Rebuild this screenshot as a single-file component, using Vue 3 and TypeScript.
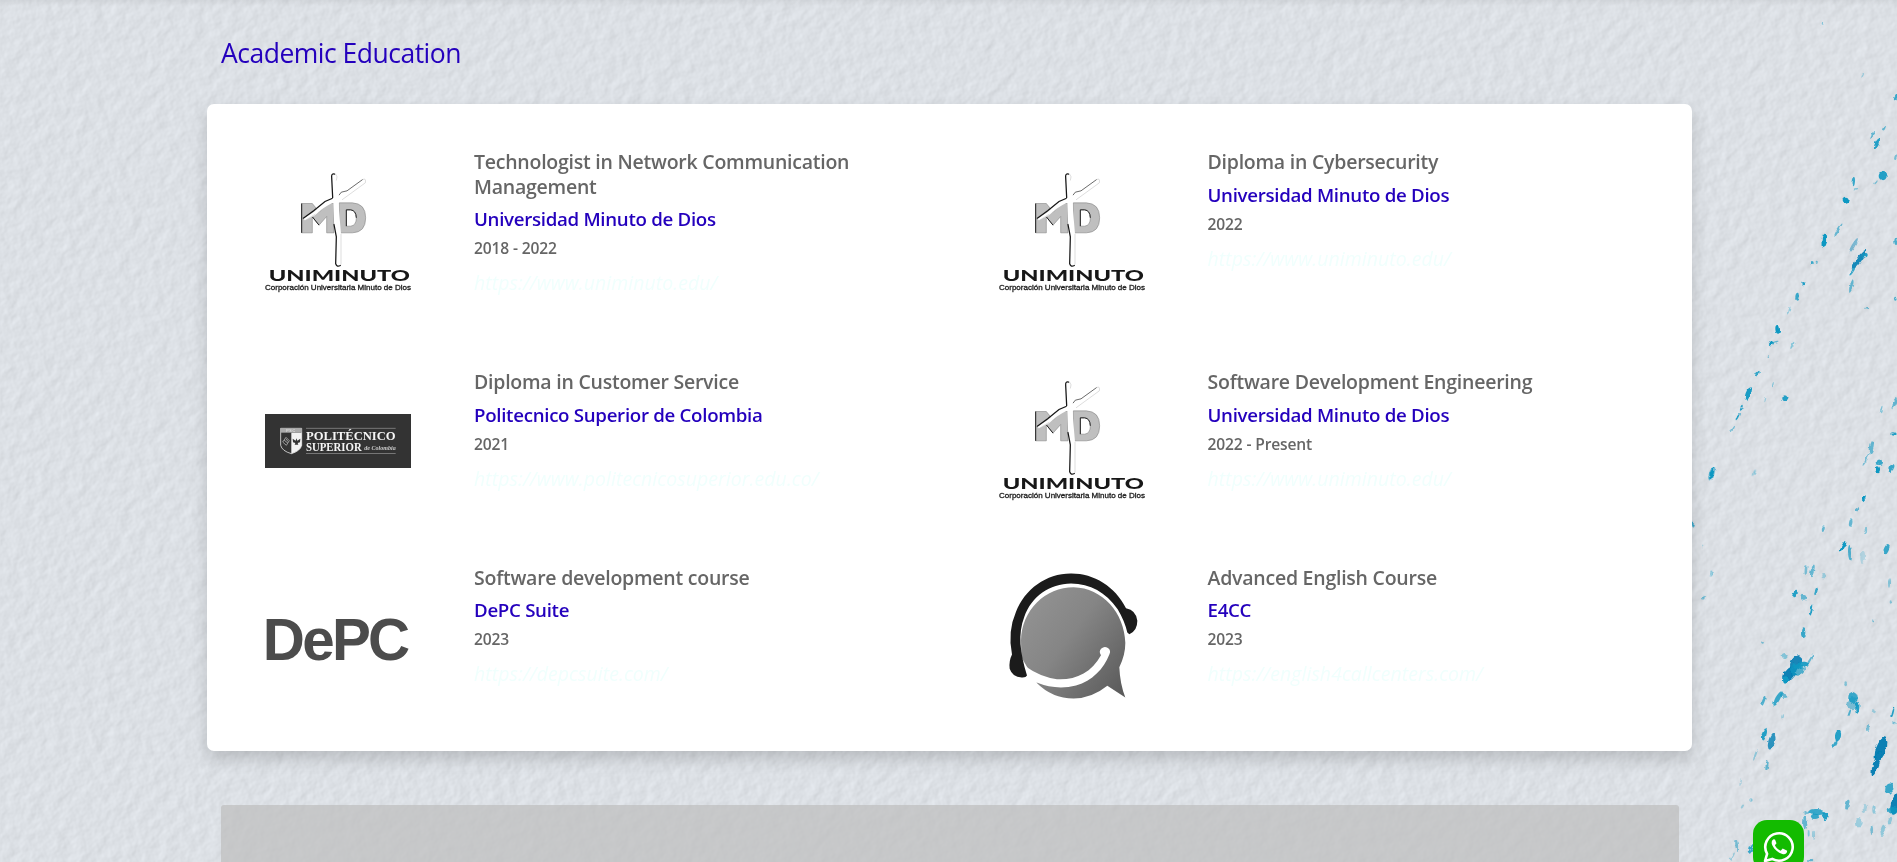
<script setup lang="ts">
interface Course {
  title: string
  school: string
  date: string
  link: string
  logo: 'uniminuto' | 'politecnico' | 'depc' | 'e4cc'
}

const courses: Course[] = [
  { title: 'Technologist in Network Communication Management', school: 'Universidad Minuto de Dios', date: '2018 - 2022', link: 'https://www.uniminuto.edu/', logo: 'uniminuto' },
  { title: 'Diploma in Cybersecurity', school: 'Universidad Minuto de Dios', date: '2022', link: 'https://www.uniminuto.edu/', logo: 'uniminuto' },
  { title: 'Diploma in Customer Service', school: 'Politecnico Superior de Colombia', date: '2021', link: 'https://www.politecnicosuperior.edu.co/', logo: 'politecnico' },
  { title: 'Software Development Engineering', school: 'Universidad Minuto de Dios', date: '2022 - Present', link: 'https://www.uniminuto.edu/', logo: 'uniminuto' },
  { title: 'Software development course', school: 'DePC Suite', date: '2023', link: 'https://depcsuite.com/', logo: 'depc' },
  { title: 'Advanced English Course', school: 'E4CC', date: '2023', link: 'https://english4callcenters.com/', logo: 'e4cc' },
]

// Paint drops: x, y, half width, half length, tilt, opacity
type Drop = [number, number, number, number, number, number]
const drops: Drop[] = [
  [398, 71, 3, 3, 0, .4], [518, 224, 2, 7, 30, .3], [618, 292, 4, 10, 30, .8],
  [548, 405, 4, 13, 25, .6], [583, 384, 3, 8, 25, .6], [561, 431, 6, 17, 25, .9],
  [578, 528, 12, 13, 0, .9], [490, 545, 5, 14, 5, .8], [498, 568, 7, 4, 0, .4], [558, 548, 3, 6, 50, .4],
  [467, 599, 9, 9, 0, 1], [445, 689, 3, 22, 33, .6], [403, 722, 8, 22, 8, 1],
  [490, 737, 5, 26, 30, .45], [508, 778, 8, 34, 35, .9], [524, 765, 9, 7, 0, .9], [484, 858, 4, 18, 18, .6], [487, 815, 3, 14, 35, .8],
  [366, 789, 5, 6, 0, .8], [380, 785, 3, 3, 0, .6], [340, 851, 6, 5, 0, .9], [321, 890, 5, 12, 8, .8], [298, 930, 2, 11, 15, .35],
  [263, 988, 7, 13, -5, 1], [244, 1030, 8, 5, -15, 1], [258, 1025, 8, 2, -15, .6], [307, 1036, 3, 12, 25, .4], [235, 1069, 2, 3, 0, .5],
  [202, 1121, 5, 10, 30, .8], [175, 1181, 8, 20, 22, .95], [154, 1225, 3, 8, 25, .9], [143, 1250, 3, 12, 25, .9], [127, 1284, 3, 10, 25, .5],
  [286, 1195, 9, 9, 0, .9], [248, 1156, 2, 10, 15, .4], [226, 1199, 2, 8, 15, .3], [529, 925, 5, 4, 0, .6], [616, 896, 4, 6, 0, .7],
  [618, 724, 5, 11, 0, .7], [614, 1208, 6, 18, 25, .6], [574, 1227, 2, 10, 15, .5], [617, 470, 3, 10, 20, .5],
  [612, 1302, 8, 5, 0, .9], [544, 1340, 7, 20, 10, .6], [528, 1380, 3, 20, 30, .5], [568, 1387, 11, 8, 10, .8], [564, 1408, 6, 9, 0, 1], [604, 1404, 7, 13, 30, .8],
  [65, 1421, 7, 20, 18, 1], [193, 1418, 3, 10, 20, .4], [7, 1572, 4, 10, 0, .8], [38, 1640, 2, 6, 0, .3], [64, 1720, 4, 9, 0, .4], [40, 1793, 4, 5, 0, .6],
  [520, 1496, 5, 9, 40, 1], [502, 1526, 6, 5, 0, .6], [482, 1569, 5, 11, 10, .6], [400, 1586, 4, 10, 10, .6], [527, 1593, 4, 10, 10, .4],
  [459, 1641, 4, 20, 28, 1], [480, 1658, 6, 23, -3, .7], [518, 1672, 7, 20, 5, .2], [589, 1647, 7, 16, 25, .8],
  [348, 1710, 4, 14, 5, .5], [367, 1713, 5, 20, 15, .6], [402, 1727, 8, 8, 0, .3], [314, 1782, 5, 11, 30, .9], [341, 1792, 8, 7, 10, .6], [378, 1774, 4, 12, 15, .8],
  [364, 1832, 3, 19, 15, .9], [341, 1898, 5, 13, 0, .8], [218, 1930, 4, 4, 0, .5], [550, 1862, 3, 5, 0, .5], [597, 1749, 3, 14, 0, .4], [602, 1806, 3, 5, 0, .4],
  [318, 1990, 16, 26, 25, .95], [300, 2020, 16, 27, 35, 1], [330, 1996, 24, 9, -15, .9], [287, 2040, 8, 11, 0, 1], [358, 1983, 3, 22, 30, .6], [284, 1968, 8, 9, -35, .4], [322, 2008, 22, 19, 0, .7],
  [263, 2096, 7, 24, 28, .8], [281, 2087, 11, 6, 10, .6], [220, 2104, 4, 14, 20, .7], [278, 2149, 4, 6, 0, .3],
  [489, 2092, 14, 17, 0, .8], [488, 2110, 18, 18, 0, .5], [502, 2122, 6, 20, 5, .9], [478, 2140, 3, 12, 20, .7], [467, 2053, 4, 6, 0, .4],
  [222, 2205, 7, 20, 18, .9], [245, 2224, 10, 25, 15, .8], [231, 2295, 4, 15, 10, .6], [196, 2265, 3, 18, 20, .35],
  [444, 2207, 9, 16, 10, .9], [435, 2232, 4, 14, 30, .8], [534, 2184, 4, 12, 0, .5], [607, 2138, 4, 15, 15, .9], [612, 2169, 5, 4, 0, .5], [550, 2134, 4, 6, 0, .3],
  [573, 2248, 15, 38, 20, 1], [559, 2291, 9, 37, 18, 1], [598, 2366, 12, 16, 15, .8], [617, 2410, 14, 35, 15, 1], [610, 2430, 17, 12, 0, .8],
  [472, 2414, 5, 15, 15, .6], [524, 2424, 6, 12, 5, .25], [505, 2468, 10, 14, 0, .3], [552, 2430, 5, 11, 0, .35], [545, 2489, 4, 12, 0, .5], [578, 2491, 6, 17, 10, .35], [600, 2462, 5, 12, 20, .35],
  [382, 2436, 25, 9, 5, .8], [405, 2448, 8, 12, 0, .9], [375, 2449, 12, 8, 0, .8], [344, 2468, 5, 20, 0, .6], [356, 2500, 3, 10, 0, .4], [372, 2506, 3, 14, 0, .3], [350, 2438, 8, 5, -35, .5],
  [183, 2400, 5, 5, 0, .4], [157, 2421, 4, 8, 25, .3], [140, 2536, 4, 18, -5, .5], [184, 2545, 5, 17, 20, .8], [127, 2570, 3, 14, 30, .3], [362, 2583, 8, 4, 0, .6], [152, 2348, 3, 10, 15, .2],
]
</script>

<template>
  <main class="page">
    <svg class="paper" width="1897" height="862" viewBox="0 0 1897 862" aria-hidden="true">
      <defs>
        <filter id="grain" x="0" y="0" width="100%" height="100%" color-interpolation-filters="sRGB">
          <feTurbulence type="fractalNoise" baseFrequency="0.08 0.08" numOctaves="3" seed="12" />
          <feDiffuseLighting surfaceScale="0.38" diffuseConstant="1.118" lighting-color="#dbdfe4">
            <feDistantLight azimuth="205" elevation="64" />
          </feDiffuseLighting>
        </filter>
        <filter id="rough" x="-5%" y="-5%" width="110%" height="110%">
          <feTurbulence type="fractalNoise" baseFrequency="0.2" numOctaves="2" seed="4" result="n" />
          <feDisplacementMap in="SourceGraphic" in2="n" scale="4" xChannelSelector="R" yChannelSelector="G" />
          <feGaussianBlur stdDeviation="0.4" />
        </filter>
        <linearGradient id="topShade" x1="0" y1="0" x2="0" y2="1">
          <stop offset="0" stop-color="#000" stop-opacity=".05" /><stop offset="1" stop-color="#000" stop-opacity="0" />
        </linearGradient>
      </defs>
      <rect width="1897" height="862" filter="url(#grain)" />
      <rect width="1897" height="6" fill="url(#topShade)" />
      <g filter="url(#rough)">
        <g transform="translate(1690 0) scale(.33333)">
          <ellipse v-for="(d, i) in drops" :key="i" :rx="d[2]" :ry="d[3]" :opacity="d[5]"
            :fill="d[3] > 24 ? '#0780b4' : '#0f98c2'" :transform="`translate(${d[0]} ${d[1]}) rotate(${d[4]})`" />
        </g>
      </g>
    </svg>

    <div class="content">
      <h2 class="heading">Academic Education</h2>
      <section class="card">
        <article v-for="(c, i) in courses" :key="i" class="course">
          <div class="logo">
            <svg v-if="c.logo === 'uniminuto'" width="146" height="146" viewBox="45 -1.5 438 438">
              <g font-family="Liberation Sans, Arial, sans-serif" font-weight="700">
                <g fill="#bfbfbf" stroke="#777" stroke-width="1.5">
                  <path d="M155 129H187L208 155L230 129H252V217H230V168L207 194L187 169V217H155Z" />
                  <path fill-rule="evenodd" d="M268 127H307Q347 129 347 172Q347 216 307 217H268ZM289 148V197H302Q319 195 319 172Q319 149 302 148Z" />
                </g>
                <path d="M155 217V129M187 169L207 194M289 197V148H302Q318 150 319 172" fill="none" stroke="#222" stroke-width="3" />
                <path d="M244 45Q250 37 261 46L259 100Q269 100 276 96L338 57Q349 52 346 67L276 119L265 126L273 220L272 312Q265 323 257 311L259 260L253 205L250 126Q218 141 195 164L165 180L160 174L190 155L224 125L246 112Z" fill="#fff" />
                <path d="M254 41Q244 38 245 50L248 111M160 173L191 151L225 123L246 114M252 192L259 229L257 310Q261 321 271 315" fill="none" stroke="#171717" stroke-width="3.8" stroke-linecap="round" />
                <path d="M267 104L274 95L291 91L338 57" fill="none" stroke="#333" stroke-width="2.2" />
                <path d="M257 41Q264 47 259 60M338 57Q349 52 346 67L276 118M273 220V312M165 180L196 161" fill="none" stroke="#aaa" stroke-width="1.2" />
                <text x="56" y="362" font-size="45" font-family="Lato, sans-serif" font-weight="900" textLength="424" lengthAdjust="spacingAndGlyphs" fill="#171717">UNIMINUTO</text>
                <text x="45" y="388" font-size="22" font-weight="400" textLength="438" lengthAdjust="spacingAndGlyphs" fill="#222" stroke="#222" stroke-width=".9">Corporación Universitaria Minuto de Dios</text>
              </g>
            </svg>
            <svg v-else-if="c.logo === 'politecnico'" width="146" height="54" viewBox="45 39 438 162">
              <path d="M45 39H483V201H45Z" fill="#333" />
              <path d="M92 82H155V133Q151 150 124 158Q96 150 92 133Z" fill="#333" stroke="#ddd" stroke-width="2.5" />
              <path d="M91 82H156V95H91Z" fill="#aaa" />
              <path d="M124 95H155V133Q151 150 124 158Z" fill="#f2f2f2" />
              <path d="M108 109L118 119L109 133L98 123ZM102 117L114 127M107 113L115 122" fill="none" stroke="#999" stroke-width="3" />
              <path d="M128 113L137 119L139 112L142 119L151 113L150 124L143 126L145 131H134L136 126L129 124Z" fill="#333" />
              <text x="123" y="93" font-family="Liberation Sans, sans-serif" font-size="11" text-anchor="middle" fill="#eee" letter-spacing="2">PSC</text>
              <path d="M168 82H437M168 157.5H437" stroke="#999" stroke-width="2" />
              <g font-family="Liberation Serif, Times New Roman, serif" fill="#f5f5f5">
                <text x="168" y="117" font-size="39" font-weight="700" textLength="269" lengthAdjust="spacingAndGlyphs">POLITÉCNICO</text>
                <text x="168" y="150" font-size="35" font-weight="700" textLength="167" lengthAdjust="spacingAndGlyphs">SUPERIOR</text>
                <text x="343" y="147" font-size="20" font-style="italic" font-weight="700" textLength="94" lengthAdjust="spacingAndGlyphs" fill="#ccc">de Colombia</text>
              </g>
            </svg>
            <svg v-else-if="c.logo === 'depc'" class="wide" width="154" height="146" viewBox="33 -112.5 462 438">
              <text x="38.5" y="178" font-family="Liberation Sans, Arial, sans-serif" font-size="175" font-weight="700" textLength="442" lengthAdjust="spacing" fill="#4c4c4c">DePC</text>
            </svg>
            <svg v-else width="146" height="146" viewBox="26 7.5 438 438">
              <defs>
                <linearGradient id="bubble" x1="0" y1=".1" x2="1" y2=".9">
                  <stop offset="0" stop-color="#949494" /><stop offset=".45" stop-color="#858585" /><stop offset="1" stop-color="#5b5b5b" />
                </linearGradient>
              </defs>
              <path d="M405 247Q405 284 387 320Q389 370 405 411L351 376Q304 414 250 414Q185 414 138 366L93 290L92 240C94 148 165 80 250 80C336 82 403 157 405 247Z" fill="url(#bubble)" />
              <path d="M106 318Q151 350 200 356C255 359 303 337 332 284A15 15 0 1 1 357 282C340 325 306 361 257 375Q198 390 139 366L116 395L75 350Z" fill="#fff" />
              <path d="M65 282Q51 214 77 154C103 86 168 39 241 39C309 38 374 77 407 143Q438 149 441 181Q441 212 417 221L411 216Q403 181 382 146C346 96 300 69 242 69C178 70 124 107 102 169C82 221 89 276 110 345Q107 352 94 351Q66 350 58 325Q55 302 65 282Z" fill="#1b1b1b" />
            </svg>
          </div>
          <div class="info">
            <h3 class="title">{{ c.title }}</h3>
            <h4 class="school">{{ c.school }}</h4>
            <p class="date">{{ c.date }}</p>
            <a class="link">{{ c.link }}</a>
          </div>
        </article>
      </section>
      <div class="panel"></div>
    </div>

    <a class="whatsapp" aria-label="WhatsApp">
      <svg width="32" height="32" viewBox="0 0 32 32">
        <path d="M2 30L4.1 22.8A13.7 13.7 0 1 1 9.2 27.9Z" fill="none" stroke="#fff" stroke-width="2.6" stroke-linejoin="round" />
        <path d="M10.6 8.2C8.5 9.2 8.1 12 9.4 14.5C11.5 18.7 15 21.7 19.3 23C22.2 23.8 24.1 22.4 24.2 19.8L19.7 17.4L17.7 19.7C15.1 18.6 13.1 16.7 11.9 14.3L13.5 12.3L12 8.4Z" fill="#fff" />
      </svg>
    </a>
  </main>
</template>

<style>
html, body { margin: 0; overflow: hidden; }
</style>

<style scoped>
.page {
  position: relative;
  width: 1897px;
  height: 862px;
  overflow: hidden;
  background: #dadfe3;
  font-family: "Segoe UI", "Open Sans", "Noto Sans", sans-serif;
}
.paper { position: absolute; inset: 0; }
.content { position: relative; width: 1485px; margin-left: 207px; padding-top: 36px; }
h2, h3, h4, p { margin: 0; }
.heading {
  height: 34px;
  margin: 0 0 34px 14px;
  color: #2400bd;
  font-size: 26.5px;
  font-weight: 400;
  line-height: 35px;
  letter-spacing: -.5px;
}
.card {
  display: grid;
  grid-template-columns: 733.5px 733.5px;
  grid-template-rows: 220px 195.5px 195.5px;
  box-sizing: border-box;
  height: 647px;
  padding: 19px 9px 17px;
  border-radius: 7px;
  background: #fff;
  box-shadow: 0 8px 16px rgba(0, 0, 0, .16);
}
.course { display: flex; }
.logo { display: flex; align-items: center; width: 146px; margin: 0 63px 0 49px; }
.logo svg { display: block; flex: none; }
.logo .wide { margin-left: -4px; }
.info { display: flex; flex-direction: column; width: 400px; padding-top: 27px; white-space: nowrap; }
.title { color: #666; font-size: 19.5px; font-weight: 600; line-height: 24.5px; white-space: normal; letter-spacing: -.24px; }
.school { margin-top: 8px; color: #2400bd; font-size: 18.7px; font-weight: 600; line-height: 24.4px; letter-spacing: -.3px; }
.date { margin-top: 6px; color: #666; font-size: 15.6px; font-weight: 600; line-height: 22.4px; letter-spacing: -.15px; }
.link { margin-top: 10.5px; color: #f0fffd; font-size: 19.5px; font-style: italic; line-height: 26px; letter-spacing: .05px; }
.panel { height: 70px; margin: 54px 13px 0 14px; border-radius: 3px 3px 0 0; background: rgba(190, 190, 190, .72); }
.whatsapp {
  position: absolute;
  top: 820px;
  left: 1753px;
  display: flex;
  justify-content: center;
  box-sizing: border-box;
  width: 51px;
  height: 51px;
  padding-top: 11px;
  border-radius: 14px;
  background: #13bb00;
}
</style>
